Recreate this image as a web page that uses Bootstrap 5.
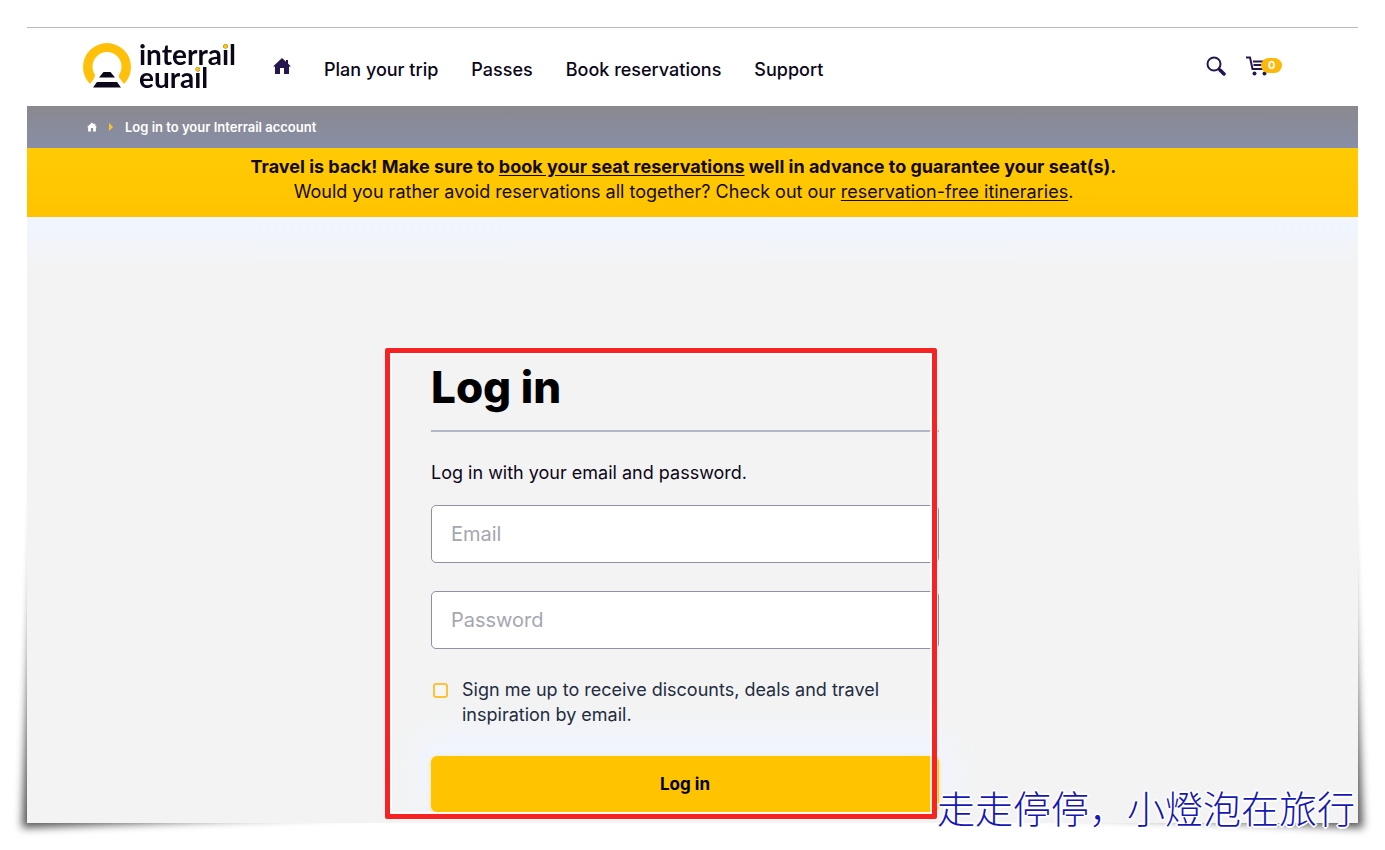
<!DOCTYPE html>
<html lang="en">
<head>
<meta charset="utf-8">
<meta name="viewport" content="width=device-width, initial-scale=1">
<title>Log in to your Interrail account</title>
<link href="https://cdn.jsdelivr.net/npm/bootstrap@5.3.0/dist/css/bootstrap.min.css" rel="stylesheet">
<style>
  :root { --ink: #0b0618; --navy: #261650; --sun: #ffc300; }
  body { background: #fff; color: var(--ink); font-family: Inter, "Noto Sans", sans-serif; font-size: 18px; line-height: 25px; }
  .page-frame { padding: 27px; min-height: 100vh; }
  .sheet { isolation: isolate; }
  .sheet-body { background: #f3f3f3; }

  /* curled-paper shadow behind the lower corners */
  .sheet-shadow { position: absolute; inset: 50% -5px -5px; z-index: -1; filter: blur(4px); }
  .sheet-shadow::before { content: ""; display: block; height: 100%; background: #555;
    clip-path: polygon(14px 10%, 0 100%, 26% calc(100% - 14px), 74% calc(100% - 14px), 100% 100%, calc(100% - 14px) 10%); }

  .site-header { background: #fff; border-top: 1px solid #b9bcc2; height: 79px; padding: 0 78px 2px 56px; }
  .brand { color: var(--ink); text-decoration: none; gap: 8px; }
  .brand-line { display: block; width: max-content; font-family: Lato, Inter, sans-serif; font-weight: 700; font-size: 28px; line-height: 23px; color: transparent;
    background: linear-gradient(var(--sun), var(--sun)) right 6px top 0 / 7px 6px no-repeat, var(--ink); -webkit-background-clip: text; background-clip: text; }
  .site-header .nav-link { color: var(--ink); padding: 7px 0 0; font-weight: 450; font-size: 18px; }
  .main-nav { gap: 33px; margin-left: 37px; }
  .icon-button { border: 0; background: none; padding: 0; color: var(--navy); line-height: 0; }
  .cart-count { position: absolute; top: 2px; left: 15px; padding: 0 7px; border-radius: 8px; background: #fdb90b; color: #fff; font-size: 11px; font-weight: 700; line-height: 15px; }

  .crumb-bar { background: linear-gradient(#8a898f, #888ea7); height: 42px; padding: 0 60px; gap: 12px; color: #fff; font-size: 13px; font-weight: 600; }
  .notice { background: linear-gradient(#ffcb05, #ffc300); padding: 6px 18px 13px 0; color: #140a05; }
  .notice a { color: inherit; text-underline-offset: 2px; }
  .notice .lead-line { font-weight: 700; }

  .login-zone { background: linear-gradient(#f0f5ff, #f3f3f3 56px); padding: 131px 15px 3px 0; }
  .login-panel { width: 600px; max-width: 100%; padding: 15px 46px 7px; }
  .login-panel h1 { font-size: 44px; line-height: 48px; font-weight: 800; margin: 0; color: #000; }
  .login-panel hr { margin: 19px 0 28px; color: #b4b8c6; border-top-width: 2px; opacity: 1; }
  .login-panel .form-control { height: 58px; margin-bottom: 28px; padding: 0 19px; border: 1px solid #8e919f; border-radius: 5px; font-size: 20px; background: #fff; }
  .login-panel .form-control::placeholder { color: #a5a7b0; }
  .signup { gap: 14px; margin-bottom: 29px; color: #232c40; }
  .signup .form-check-input { flex: none; width: 15px; height: 15px; margin: 6px 0 0 2px; border: 2px solid #fbc337; border-radius: 3px; background-color: #f7f6f4; }
  .login-button { height: 56px; border: 0; border-radius: 6px; background: var(--sun); color: #000; font-size: 17px; font-weight: 700; box-shadow: 0 1px 5px #ffe49a, 0 -10px 32px 14px #f0f5ff; clip-path: inset(-80px -60px -7px); }
  /* red marker frame laid over the form */
  .marker { position: absolute; inset: 0 48px 0 0; z-index: 2; border: 5px solid #f92222; border-radius: 2px; box-shadow: 0 0 0 1px #fff8, inset 0 0 0 2px #fffc; pointer-events: none; }
  .signature { position: absolute; right: 3px; bottom: -9px; z-index: 3; color: #1717b5; font-family: "Noto Sans CJK TC", sans-serif; font-weight: 300; font-size: 38px; line-height: 50px; white-space: nowrap;
    text-shadow: 2px 0 #fff, -2px 0 #fff, 0 2px #fff, 0 -2px #fff, 1px 1px #fff, -1px -1px #fff, 1px -1px #fff, -1px 1px #fff; }
  .low-comma { font-family: "Noto Sans CJK SC", sans-serif; }
</style>
</head>
<body>
<div class="page-frame d-flex flex-column">
  <div class="sheet position-relative flex-grow-1 d-flex flex-column">
    <div class="sheet-shadow"></div>

    <header class="site-header d-flex align-items-center">
      <a class="brand d-flex align-items-center" href="#">
        <svg width="48" height="46" viewBox="0 0 48 46" aria-hidden="true">
          <path d="M7 41A24 24 0 1 1 41 41L35 33A14.500 14.500 0 1 0 13 33Z" fill="#ffc00a"/>
          <path d="M12 32h24v14H9z" fill="#fff"/>
          <path d="M20.500 29h7l4.500 5.500H16zM14 39h20l4 5.500H10z" fill="#0b0618"/>
        </svg>
        <span><span class="brand-line">interrail</span><span class="brand-line">eurail</span></span>
      </a>
      <nav class="main-nav nav flex-nowrap align-items-center" aria-label="Main">
        <a class="icon-button" href="#" aria-label="Home">
          <svg width="18" height="16" viewBox="0 0 18 16"><path d="M9 0l4 3.700V2h2v3.500L18 8.500h-2V16h-5v-6H7v6H2V8.500H0z" fill="currentColor"/></svg>
        </a>
        <a class="nav-link" href="#">Plan your trip</a>
        <a class="nav-link" href="#">Passes</a>
        <a class="nav-link" href="#">Book reservations</a>
        <a class="nav-link" href="#">Support</a>
      </nav>
      <div class="d-flex align-items-center ms-auto gap-3">
        <button class="icon-button" type="button" aria-label="Search">
          <svg width="20" height="20" viewBox="0 0 20 20" fill="none" stroke="currentColor"><circle cx="8" cy="8" r="6.500" stroke-width="2"/><path d="M12.500 12.500l2 2" stroke-width="2"/><path d="M14 14l4 4" stroke-width="3.500" stroke-linecap="round"/></svg>
        </button>
        <a class="icon-button position-relative pe-2 ms-1" href="#" aria-label="Cart">
          <svg width="26" height="20" viewBox="0 0 26 20" fill="none" stroke="currentColor"><path d="M0 1.500h4L6.500 13H22" stroke-width="2"/><path d="M7 5.500h15M7.500 9h14" stroke-width="2"/><g fill="currentColor" stroke="none"><circle cx="8.500" cy="17.500" r="2"/><circle cx="18.500" cy="17.500" r="2"/></g></svg>
          <span class="cart-count">0</span>
        </a>
      </div>
    </header>

    <nav class="crumb-bar d-flex align-items-center" aria-label="Breadcrumb">
      <a class="text-white lh-1" href="#" aria-label="Home"><svg class="d-block" width="10" height="10" viewBox="0 0 18 16"><path d="M9 0l4 3.700V2h2v3.500L18 8.500h-2V16h-5v-6H7v6H2V8.500H0z" fill="currentColor"/></svg></a>
      <svg width="4" height="8" viewBox="0 0 4 8" aria-hidden="true"><path d="M0 0l4 4-4 4z" fill="#f9c32c"/></svg>
      <span>Log in to your Interrail account</span>
    </nav>

    <div class="notice text-center">
      <div class="lead-line">Travel is back! Make sure to <a href="#">book your seat reservations</a> well in advance to guarantee your seat(s).</div>
      <div>Would you rather avoid reservations all together? Check out our <a href="#">reservation-free itineraries</a>.</div>
    </div>

    <main class="sheet-body flex-grow-1">
      <div class="login-zone d-flex justify-content-center">
        <form class="login-panel position-relative">
          <h1>Log in</h1>
          <hr>
          <p class="mb-3 pb-1">Log in with your email and password.</p>
          <input class="form-control" type="email" aria-label="Email" placeholder="Email">
          <input class="form-control" type="password" aria-label="Password" placeholder="Password">
          <div class="signup d-flex position-relative z-1">
            <input class="form-check-input" type="checkbox" id="signup">
            <label for="signup">Sign me up to receive discounts, deals and travel inspiration by email.</label>
          </div>
          <button class="login-button w-100" type="submit">Log in</button>
          <div class="marker"></div>
        </form>
      </div>
    </main>
    <div class="signature" lang="zh-Hant">走走停停<span class="low-comma" lang="zh-Hans">，</span>小燈泡在旅行</div>
  </div>
</div>
<script src="https://cdn.jsdelivr.net/npm/bootstrap@5.3.0/dist/js/bootstrap.bundle.min.js"></script>
</body>
</html>
